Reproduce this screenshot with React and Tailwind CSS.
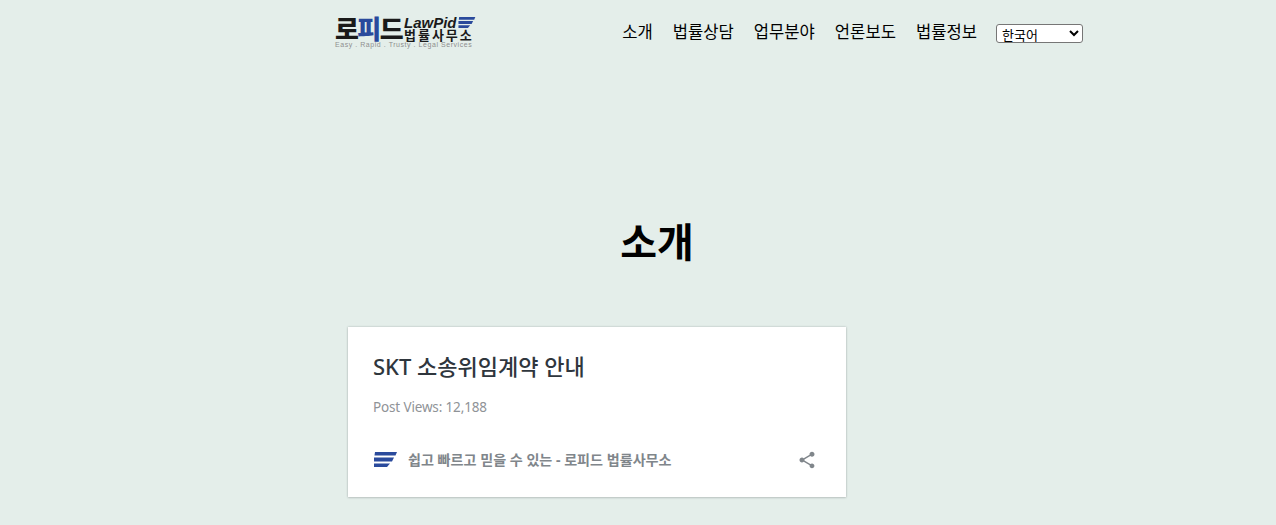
const sans = "font-['Noto_Sans','Noto_Sans_CJK_KR',sans-serif]";
const navItems = ["소개", "법률상담", "업무분야", "언론보도", "법률정보"];

const Stripes = ({ className, fill }) => (
  <svg viewBox="0 0 24 15" className={className} fill={fill}>
    <polygon points="2,0 24,0 22.5,3.6 1.5,3.6" />
    <polygon points="1,5.6 21,5.6 19,9.4 1,9.4" />
    <polygon points="1,11.4 17,11.4 14,15 1,15" />
  </svg>
);

const Logo = () => (
  <div className="flex h-[34px] w-[140px] flex-col">
    <div className="flex h-[25px] items-center">
      <span className="font-['Noto_Sans_CJK_KR',sans-serif] text-[26px] leading-[25px] font-black tracking-[-1.6px] whitespace-nowrap text-[#1a1a1a]">
        로<span className="text-[#2a4a9c]">피</span>드
      </span>
      <div className="mt-[1px] ml-[2px] flex flex-col">
        <div className="flex h-[13px] items-center">
          <span className="font-['Liberation_Sans',sans-serif] text-[15px] leading-[13px] font-bold text-[#1a1a1a] italic">
            LawPid
          </span>
          <Stripes className="-ml-[1px] h-[11px] w-[21px]" fill="#2a4a9c" />
        </div>
        <span className="font-['Noto_Sans_CJK_KR',sans-serif] text-[13px] leading-[12px] font-bold tracking-[2px] whitespace-nowrap text-[#1a1a1a]">
          법률사무소
        </span>
      </div>
    </div>
    <span className="mt-[1px] font-['Liberation_Sans',sans-serif] text-[7px] leading-[7px] tracking-[0.55px] whitespace-nowrap text-[#8f8f8f]">
      Easy . Rapid . Trusty . Legal Services
    </span>
  </div>
);

const ShareIcon = () => (
  <svg viewBox="0 0 24 24" className="h-5 w-5" fill="#80868b">
    <path d="M18 16.08c-.76 0-1.44.3-1.96.77L8.91 12.7c.05-.23.09-.46.09-.7s-.04-.47-.09-.7l7.05-4.11c.54.5 1.25.81 2.04.81 1.66 0 3-1.34 3-3s-1.34-3-3-3-3 1.34-3 3c0 .24.04.47.09.7L8.04 9.81C7.5 9.31 6.79 9 6 9c-1.66 0-3 1.34-3 3s1.34 3 3 3c.79 0 1.5-.31 2.04-.81l7.12 4.16c-.05.21-.08.43-.08.65 0 1.61 1.31 2.92 2.92 2.92 1.61 0 2.92-1.31 2.92-2.92s-1.31-2.92-2.92-2.92z" />
  </svg>
);

export default function App() {
  return (
    <div className={`h-[525px] overflow-hidden bg-[#e4eeea] ${sans}`}>
      <header className="flex h-[60px] w-[1083px] items-start justify-between pt-[15px] pl-[335px]">
        <Logo />
        <nav className="flex items-center gap-[20px] pt-[3px]">
          {navItems.map((item) => (
            <a key={item} className="font-['Noto_Sans_CJK_KR',sans-serif] text-[16.6px] leading-[26px] font-normal text-black">
              {item}
            </a>
          ))}
          <select className="mt-[5px] -ml-[1px] h-[19px] w-[87px] rounded-[3px] border border-[#767676] bg-white pl-[1px] text-[13px] leading-none text-black">
            <option>한국어</option>
          </select>
        </nav>
      </header>

      <main className="ml-[348px] w-[618px]">
        <h1 className="mt-[150px] text-center text-[40px] leading-[64px] font-bold text-black">소개</h1>

        <article className="mt-[53px] h-[170px] w-[498px] bg-white px-[25px] pt-[23px] shadow-[0_0_2px_rgba(60,64,67,0.3),0_1px_2px_rgba(60,64,67,0.15)]">
          <h2 className="text-[22px] leading-[32px] font-medium text-[#2f363d]">SKT 소송위임계약 안내</h2>
          <p className="mt-[13px] text-[13.5px] leading-[24px] tracking-[-0.15px] text-[#8f9397]">Post Views: 12,188</p>
          <footer className="mt-[29px] flex items-center justify-between">
            <div className="flex items-center">
              <Stripes className="h-[15px] w-[24px]" fill="#2a4a9c" />
              <span className="mt-[1px] ml-[11px] text-[14.1px] leading-[20px] font-bold text-[#80868b]">
                쉽고 빠르고 믿을 수 있는 - 로피드 법률사무소
              </span>
            </div>
            <div className="mt-[2px] mr-[4px]">
              <ShareIcon />
            </div>
          </footer>
        </article>
      </main>
    </div>
  );
}
